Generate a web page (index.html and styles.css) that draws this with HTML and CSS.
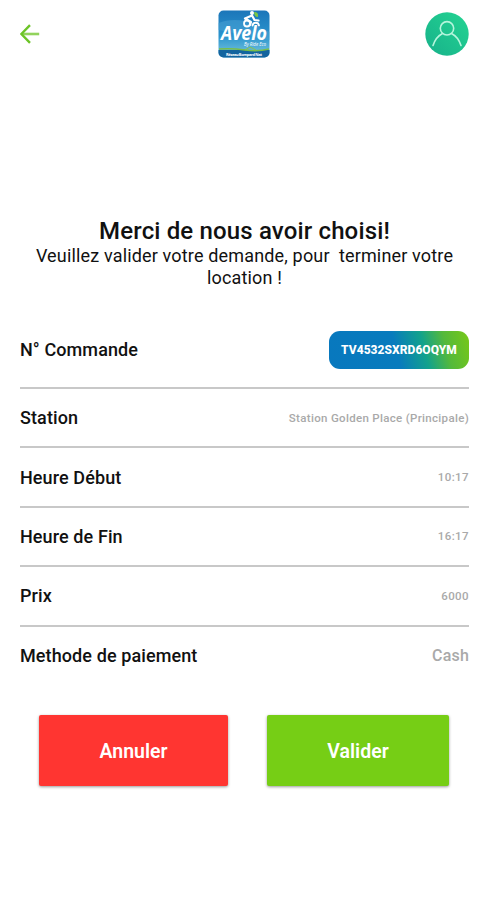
FILE: index.html
```html
<!DOCTYPE html>
<html lang="fr">

<head>
    <meta charset="UTF-8">
    <title>Avelo - Validation</title>
    <link rel="stylesheet" href="styles.css">
</head>

<body>
    <!-- Top bar -->
    <header class="topbar">
        <svg class="back" viewBox="0 0 20 20" fill="none">
            <path d="M19.2 10H2" stroke="#92d35c" stroke-width="2.6" />
            <path d="M10 1.2L1.4 10l8.6 8.8" stroke="#6cc427" stroke-width="2.4" />
        </svg>
        <svg class="logo" viewBox="0 0 52 48">
            <defs>
                <linearGradient id="sky" x1="0" y1="0" x2="0" y2="1">
                    <stop offset="0" stop-color="#1b76b9" />
                    <stop offset="0.55" stop-color="#2b94ce" />
                    <stop offset="0.85" stop-color="#62b7da" />
                </linearGradient>
            </defs>
            <rect x="0.5" y="0.5" width="51" height="47" rx="5" fill="url(#sky)" />
            <path d="M0.5 13Q12 8 28 11L51.5 22V30L0.5 20z" fill="#4ca3d6" opacity="0.5" />
            <path d="M0.5 40H51.5V42.5a5 5 0 0 1-5 5H5.5a5 5 0 0 1-5-5z" fill="#13649f" />
            <path d="M1 39Q14 38 27 40T51 39" stroke="#78bd49" stroke-width="1.5" fill="none" />
            <path d="M27 40l5-3 6 3" stroke="#8bc34a" fill="none" />
            <!-- Cyclist -->
            <g fill="none" stroke="#fff" stroke-width="1.8" stroke-linecap="round" stroke-linejoin="round">
                <circle cx="29" cy="13.5" r="3" />
                <path d="M34 5.500L27 8.500l6 3.500-1 3M34 5.500l2.500 4.500 4 0.500" stroke-width="2.2" />
                <path d="M34.500 15.500a3.300 3.300 0 0 1 6.500 0" />
            </g>
            <circle cx="34" cy="3" r="2" fill="#fff" />
            <path d="M36 2q5 0 4 5-4 0-4-5z" fill="#7bc744" />
            <text class="logo-name" x="3" y="30" textLength="46" lengthAdjust="spacingAndGlyphs">Avelo</text>
            <text class="logo-by" x="26" y="35.8" textLength="22">By Ride Eco</text>
            <text class="logo-base" x="8" y="45.5" textLength="36">Réseau Bompard Nat</text>
        </svg>
        <svg class="avatar" viewBox="0 0 44 44" fill="none">
            <defs>
                <linearGradient id="green" x1="0" y1="1" x2="1" y2="0">
                    <stop offset="0" stop-color="#17b18a" />
                    <stop offset="1" stop-color="#24d492" />
                </linearGradient>
            </defs>
            <circle cx="22" cy="22" r="21.7" fill="url(#green)" />
            <g stroke="#b5f5dc" stroke-width="1.6" stroke-linecap="round">
                <circle cx="22" cy="16.3" r="6.7" />
                <path d="M8 33.5C10 27.5 13.5 23.5 17.5 21.5M26.5 21.5C30.5 23.5 34 27.5 36 33.5" />
            </g>
        </svg>
    </header>

    <!-- Message -->
    <section class="intro">
        <h1>Merci de nous avoir choisi!</h1>
        <p>Veuillez valider votre demande, pour&nbsp; terminer votre<br>location !</p>
    </section>

    <!-- Order details -->
    <main class="details">
        <div class="row row-first">
            <span class="label">N° Commande</span>
            <span class="badge">TV4532SXRD6OQYM</span>
        </div>
        <div class="row">
            <span class="label">Station</span>
            <span class="value value-station">Station Golden Place (Principale)</span>
        </div>
        <div class="row">
            <span class="label">Heure Début</span>
            <span class="value">10:17</span>
        </div>
        <div class="row">
            <span class="label">Heure de Fin</span>
            <span class="value">16:17</span>
        </div>
        <div class="row">
            <span class="label">Prix</span>
            <span class="value">6000</span>
        </div>
        <div class="row row-last">
            <span class="label">Methode de paiement</span>
            <span class="value value-large">Cash</span>
        </div>
    </main>

    <!-- Actions -->
    <div class="actions">
        <button type="button" class="btn btn-cancel">Annuler</button>
        <button type="button" class="btn btn-confirm">Valider</button>
    </div>
</body>

</html>
```
FILE: styles.css
```css
* {
    box-sizing: border-box;
}
body {
    margin: 0;
    height: 900px;
    background-color: #fff;
    color: #111;
    font-family: Roboto, sans-serif;
}

/* Top bar */
.topbar {
    display: flex;
    justify-content: space-between;
    align-items: center;
    height: 68px;
    padding: 0 20px;
}
.back {
    width: 20px;
    height: 20px;
    margin-right: 22px;
}
.logo {
    width: 52px;
    height: 48px;
}
.avatar {
    width: 44px;
    height: 44px;
}
.logo text {
    fill: #fff;
    font-family: "Open Sans", sans-serif;
    font-style: italic;
}
.logo-name {
    font-size: 19px;
    font-weight: 700;
}
.logo-by {
    font-size: 4.5px;
}
.logo .logo-base {
    font-size: 4px;
    font-style: normal;
    font-weight: 700;
}

/* Message */
.intro {
    margin-top: 150px;
    text-align: center;
}
.intro h1 {
    margin: 0;
    font-size: 24px;
    font-weight: 500;
    line-height: 27px;
    letter-spacing: 0.15px;
}
.intro p {
    margin: 0;
    font-size: 18px;
    line-height: 22px;
    letter-spacing: 0.16px;
}

/* Order details */
.details {
    margin: 23px 20px 0;
}
.row {
    display: flex;
    justify-content: space-between;
    align-items: center;
    height: 59.4px;
    border-bottom: 2px solid #c8c8c8;
}
.row-first {
    height: 77px;
}
.row-last {
    height: 58px;
    border-bottom: none;
}
.label {
    font-size: 18px;
    font-weight: 500;
    letter-spacing: 0.1px;
}
.value {
    color: #a9a9a9;
    font-size: 11.5px;
    font-weight: 500;
    letter-spacing: 0.4px;
}
.value-station {
    letter-spacing: 0.32px;
}
.value-large {
    font-size: 16px;
    letter-spacing: 0.2px;
}
.badge {
    display: flex;
    justify-content: center;
    align-items: center;
    width: 140px;
    height: 38px;
    border-radius: 11px;
    background: linear-gradient(75deg, #0878be 0%, #087bbd 48%, #12a28c 67%, #54b93b 82%, #78c817 100%);
    color: #fff;
    font-size: 12px;
    font-weight: 800;
    letter-spacing: 0.05px;
}

/* Actions */
.actions {
    display: flex;
    justify-content: space-between;
    margin: 30px 40px 0 39px;
}
.btn {
    width: 189px;
    height: 71px;
    padding-top: 3px;
    border: none;
    border-radius: 2px;
    box-shadow: 0 1px 3px rgba(0, 0, 0, 0.4);
    color: #fff;
    font-family: inherit;
    font-size: 19.5px;
    font-weight: 600;
}
.btn-cancel {
    background-color: #ff3531;
}
.btn-confirm {
    width: 182px;
    background-color: #76ce15;
}
```
